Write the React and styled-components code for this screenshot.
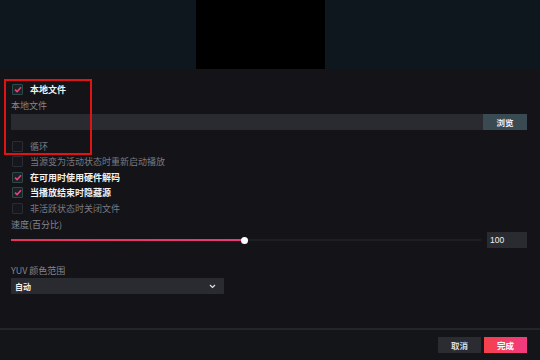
import React from 'react'
import styled, { createGlobalStyle } from 'styled-components'

const Global = createGlobalStyle`
  html, body { margin: 0; padding: 0; background: #131318; }
  body {
    width: 540px;
    height: 360px;
    overflow: hidden;
    font-family: "Noto Sans CJK SC", "Noto Sans", sans-serif;
  }
`

const Page = styled.div`
  width: 540px;
  height: 360px;
  display: flex;
  flex-direction: column;
  background: #131318;
  position: relative;
`

const Preview = styled.div`
  height: 70px;
  background: #0e171d;
  display: flex;
  padding-left: 196px;
`

const Screen = styled.div`
  width: 129px;
  height: 69px;
  background: #000;
`

const Panel = styled.div`
  flex: 1;
  display: flex;
  flex-direction: column;
  padding: 12px 13px 0 11px;
`

const Row = styled.div`
  display: flex;
  align-items: center;
  gap: 7px;
  height: 15.5px;
  padding-left: 1px;
`

const Box = styled.span`
  width: 9px;
  height: 9px;
  border: 1px solid ${(p) => (p.checked ? '#2c4a4a' : '#2a2c32')};
  background: ${(p) => (p.checked ? '#1a2226' : '#16171c')};
  border-radius: 1px;
  display: flex;
  align-items: center;
  justify-content: center;
`

const CheckText = styled.span`
  font-size: 9px;
  line-height: 1;
  color: ${(p) => (p.checked ? '#f2f2f2' : '#7a7b80')};
  font-weight: ${(p) => (p.checked ? 700 : 400)};
`

const Label = styled.div`
  font-size: 9px;
  line-height: 1;
  color: #85868b;
  margin: ${(p) => p.m || '0'};
`

const FileRow = styled.div`
  display: flex;
  height: 16px;
  margin: 4px 0 9px;
`

const TextField = styled.div`
  flex: 1;
  background: #2a2b30;
`

const Browse = styled.button`
  width: 44px;
  border: none;
  background: #3a4a52;
  color: #eef;
  font-family: inherit;
  font-size: 8.5px;
  font-weight: 700;
  padding: 0;
`

const SliderRow = styled.div`
  display: flex;
  align-items: center;
  height: 16px;
  margin-top: 3.5px;
  gap: 6px;
`

const Track = styled.div`
  flex: 1;
  height: 2px;
  background: #1e1f25;
  position: relative;
`

const Fill = styled.div`
  height: 100%;
  background: linear-gradient(90deg, #e8335a, #e83a78);
`

const Knob = styled.span`
  position: absolute;
  top: -2.5px;
  width: 7px;
  height: 7px;
  margin-left: -3.5px;
  border-radius: 50%;
  background: #fff;
`

const NumBox = styled.div`
  width: 40px;
  height: 16px;
  background: #2a2b30;
  color: #f0f0f0;
  font-family: "Liberation Sans", sans-serif;
  font-size: 8.5px;
  display: flex;
  align-items: center;
  padding-left: 3px;
  box-sizing: border-box;
`

const Select = styled.div`
  width: 213px;
  height: 16px;
  margin-top: 3.5px;
  background: #2a2b30;
  display: flex;
  align-items: center;
  justify-content: space-between;
  padding: 0 8px 0 4px;
  box-sizing: border-box;
  color: #f0f0f0;
  font-size: 8px;
  font-weight: 700;
`

const Separator = styled.div`
  height: 2px;
  background: #24252b;
`

const Footer = styled.div`
  height: 30px;
  background: #141519;
  display: flex;
  align-items: center;
  justify-content: flex-end;
  gap: 3px;
  padding-right: 13px;
`

const Btn = styled.button`
  width: 43px;
  height: 16px;
  border: none;
  padding: 0;
  font-family: inherit;
  font-size: 8.5px;
  font-weight: 700;
  color: ${(p) => (p.primary ? '#fff' : '#d8d8dc')};
  background: ${(p) =>
    p.primary ? 'linear-gradient(90deg, #f5404c, #f23a80)' : '#2b2c32'};
`

const Highlight = styled.div`
  position: absolute;
  left: 4px;
  top: 79px;
  width: 84px;
  height: 72px;
  border: 2px solid #e01414;
  pointer-events: none;
`

const Check = () => (
  <svg width="8" height="7" viewBox="0 0 8 7">
    <path d="M1 3.6 L3.1 5.6 L7 1.2" fill="none" stroke="#e9417c" strokeWidth="1.6" />
  </svg>
)

const CheckRow = ({ checked, children }) => (
  <Row>
    <Box checked={checked}>{checked && <Check />}</Box>
    <CheckText checked={checked}>{children}</CheckText>
  </Row>
)

const options = [
  ['当源变为活动状态时重新启动播放', false],
  ['在可用时使用硬件解码', true],
  ['当播放结束时隐藏源', true],
  ['非活跃状态时关闭文件', false],
]

export default function App() {
  const speed = 100
  const pct = 0.496
  return (
    <Page>
      <Global />
      <Preview>
        <Screen />
      </Preview>
      <Panel>
        <CheckRow checked>本地文件</CheckRow>
        <Label m="3px 0 0">本地文件</Label>
        <FileRow>
          <TextField />
          <Browse>浏览</Browse>
        </FileRow>
        <CheckRow>循环</CheckRow>
        {options.map(([text, on]) => (
          <CheckRow key={text} checked={on}>
            {text}
          </CheckRow>
        ))}
        <Label m="3.5px 0 0">速度(百分比)</Label>
        <SliderRow>
          <Track>
            <Fill style={{ width: `${pct * 100}%` }} />
            <Knob style={{ left: `${pct * 100}%` }} />
          </Track>
          <NumBox>{speed}</NumBox>
        </SliderRow>
        <Label m="17.5px 0 0">YUV 颜色范围</Label>
        <Select>
          <span>自动</span>
          <svg width="7" height="5" viewBox="0 0 7 5">
            <path d="M1 1 L3.5 3.5 L6 1" fill="none" stroke="#e0e0e0" strokeWidth="1.2" />
          </svg>
        </Select>
      </Panel>
      <Separator />
      <Footer>
        <Btn>取消</Btn>
        <Btn primary>完成</Btn>
      </Footer>
      <Highlight />
    </Page>
  )
}
